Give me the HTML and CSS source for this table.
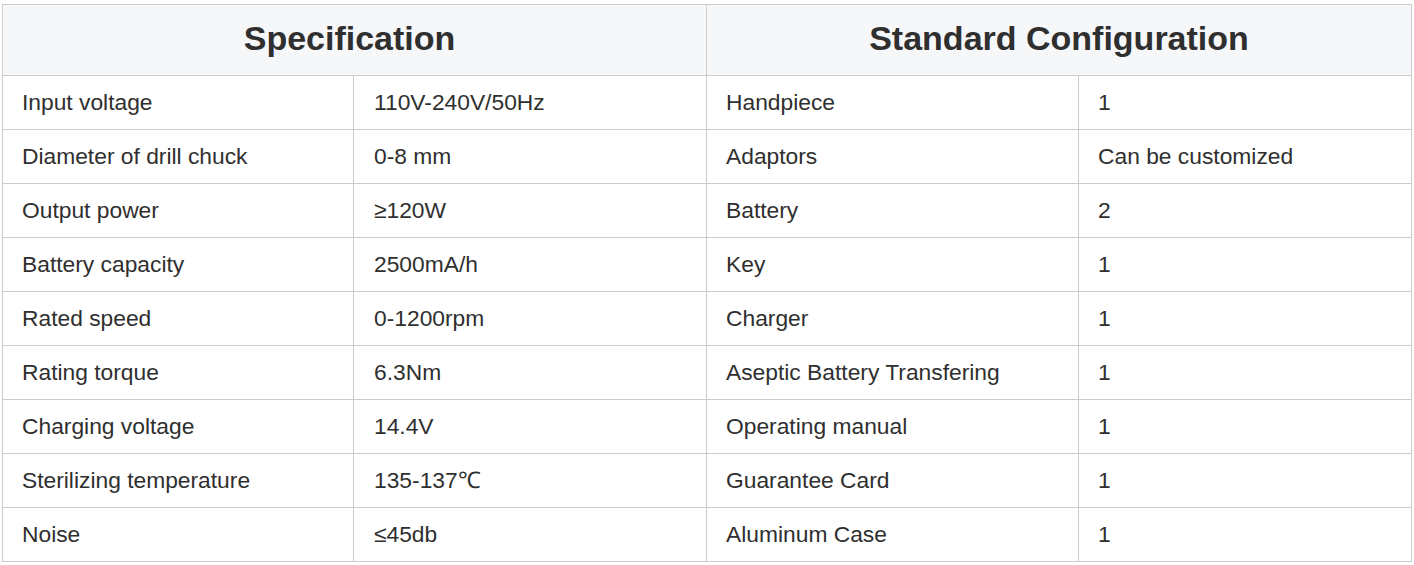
FILE: index.html
```html
<!DOCTYPE html>
<html>
<head>
<meta charset="utf-8">
<link rel="stylesheet" href="styles.css">
</head>
<body>
<table class="spec">
  <colgroup>
    <col class="c1"><col class="c2"><col class="c3"><col class="c4">
  </colgroup>
  <thead>
    <tr class="head">
      <th colspan="2" class="h-left">Specification</th>
      <th colspan="2">Standard Configuration</th>
    </tr>
  </thead>
  <tbody>
    <tr><td>Input voltage</td><td>110V-240V/50Hz</td><td>Handpiece</td><td>1</td></tr>
    <tr><td>Diameter of drill chuck</td><td>0-8 mm</td><td>Adaptors</td><td>Can be customized</td></tr>
    <tr><td>Output power</td><td>≥120W</td><td>Battery</td><td>2</td></tr>
    <tr><td>Battery capacity</td><td>2500mA/h</td><td>Key</td><td>1</td></tr>
    <tr><td>Rated speed</td><td>0-1200rpm</td><td>Charger</td><td>1</td></tr>
    <tr><td>Rating torque</td><td>6.3Nm</td><td>Aseptic Battery Transfering</td><td>1</td></tr>
    <tr><td>Charging voltage</td><td>14.4V</td><td>Operating manual</td><td>1</td></tr>
    <tr><td>Sterilizing temperature</td><td>135-137℃</td><td>Guarantee Card</td><td>1</td></tr>
    <tr><td>Noise</td><td>≤45db</td><td>Aluminum Case</td><td>1</td></tr>
  </tbody>
</table>
</body>
</html>
```
FILE: styles.css
```css
html, body {
  margin: 0;
  padding: 0;
  background: #fff;
}
body {
  padding: 4px 0 0 2px;
  font-family: "Liberation Sans", Arial, sans-serif;
  color: #2f2f2f;
}
.spec {
  border-collapse: collapse;
  table-layout: fixed;
  width: 1409px;
}
.c1 { width: 351px; }
.c2 { width: 353px; }
.c3 { width: 372px; }
.c4 { width: 333px; }
.spec th, .spec td {
  border: 1px solid #ccc;
  padding: 0 0 0 19px;
  text-align: left;
  vertical-align: middle;
}
.spec .head th {
  height: 67px;
  background: #f6f7f9;
  font-size: 34px;
  font-weight: bold;
  text-align: center;
  padding: 0 0 3px 0;
  color: #2f2f2f;
}
.spec .head th.h-left {
  padding-right: 10px;
}
.spec tbody td {
  height: 53px;
  font-size: 22.8px;
  line-height: 1;
}
.spec tbody td:nth-child(2) {
  padding-left: 20px;
}
```
